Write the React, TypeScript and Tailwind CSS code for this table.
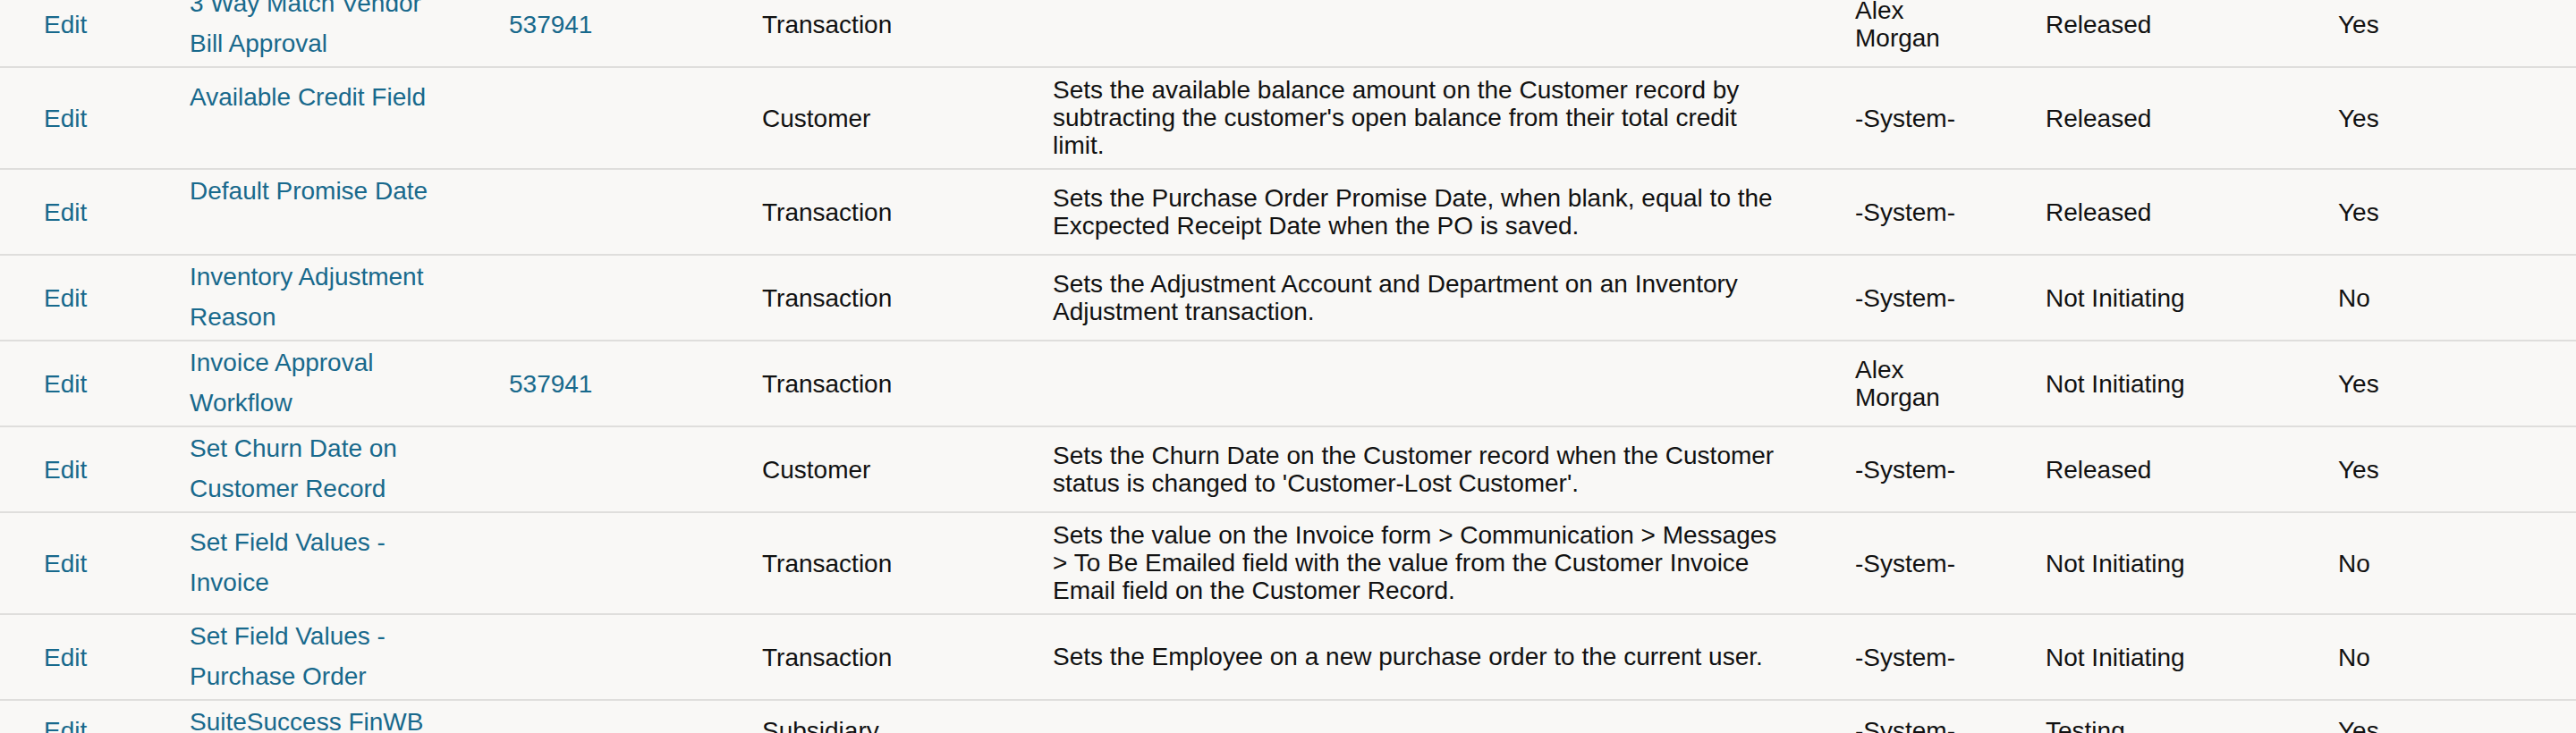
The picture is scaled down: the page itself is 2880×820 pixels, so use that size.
import React from 'react';

type Row = {
  name: string;
  id?: string;
  type: string;
  description?: string;
  owner: string;
  status: string;
  inactive: string;
  short?: boolean;
};

const ROWS: Row[] = [
  { name: '3 Way Match Vendor Bill Approval', id: '537941', type: 'Transaction', owner: 'Alex Morgan', status: 'Released', inactive: 'Yes' },
  {
    name: 'Available Credit Field',
    type: 'Customer',
    description: "Sets the available balance amount on the Customer record by subtracting the customer's open balance from their total credit limit.",
    owner: '-System-',
    status: 'Released',
    inactive: 'Yes',
  },
  {
    name: 'Default Promise Date',
    type: 'Transaction',
    description: 'Sets the Purchase Order Promise Date, when blank, equal to the Excpected Receipt Date when the PO is saved.',
    owner: '-System-',
    status: 'Released',
    inactive: 'Yes',
  },
  {
    name: 'Inventory Adjustment Reason',
    type: 'Transaction',
    description: 'Sets the Adjustment Account and Department on an Inventory Adjustment transaction.',
    owner: '-System-',
    status: 'Not Initiating',
    inactive: 'No',
  },
  { name: 'Invoice Approval Workflow', id: '537941', type: 'Transaction', owner: 'Alex Morgan', status: 'Not Initiating', inactive: 'Yes' },
  {
    name: 'Set Churn Date on Customer Record',
    type: 'Customer',
    description: "Sets the Churn Date on the Customer record when the Customer status is changed to 'Customer-Lost Customer'.",
    owner: '-System-',
    status: 'Released',
    inactive: 'Yes',
  },
  {
    name: 'Set Field Values - Invoice',
    type: 'Transaction',
    description:
      'Sets the value on the Invoice form > Communication > Messages > To Be Emailed field with the value from the Customer Invoice Email field on the Customer Record.',
    owner: '-System-',
    status: 'Not Initiating',
    inactive: 'No',
  },
  {
    name: 'Set Field Values - Purchase Order',
    type: 'Transaction',
    description: 'Sets the Employee on a new purchase order to the current user.',
    owner: '-System-',
    status: 'Not Initiating',
    inactive: 'No',
  },
  { name: 'SuiteSuccess FinWB Subsidiary Setup', type: 'Subsidiary', owner: '-System-', status: 'Testing', inactive: 'Yes', short: true },
];

export default function App() {
  return (
    <div className="h-[820px] overflow-hidden bg-[#f9f8f6] font-['Liberation_Sans',Arial,sans-serif] text-[28px] leading-[31px] text-[#111]">
      {/* list is scrolled: first row is cut off at the top */}
      <div className="-mt-[20px]">
        {ROWS.map((row, idx) => (
          <div
            key={idx}
            className="grid grid-cols-[163px_357px_283px_325px_897px_213px_327px_1fr] items-center border-b-2 border-[#dfdedc] pl-[49px]"
          >
            <a className="text-[#18698c] cursor-pointer">Edit</a>
            <div className="pt-[1px] pb-[3px]">
              <div
                className={
                  row.short
                    ? 'min-h-[62px] w-[275px] leading-[45px] text-[#18698c]'
                    : 'min-h-[90px] w-[275px] leading-[45px] text-[#18698c]'
                }
              >
                {row.short ? row.name.split(' ').slice(0, 2).join(' ') : row.name}
              </div>
            </div>
            <div className="text-[#18698c]">{row.id}</div>
            <div>{row.type}</div>
            <div className="w-[828px] pt-[9px] pb-[10px]">{row.description}</div>
            <div className="w-[130px]">{row.owner}</div>
            <div>{row.status}</div>
            <div>{row.inactive}</div>
          </div>
        ))}
      </div>
    </div>
  );
}
